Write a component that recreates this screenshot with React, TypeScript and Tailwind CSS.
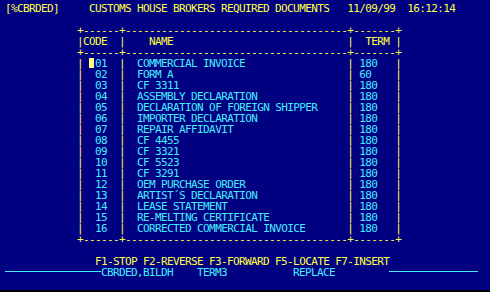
const docs: [string, string, string][] = [
  ['01', 'COMMERCIAL INVOICE', '180'],
  ['02', 'FORM A', '60'],
  ['03', 'CF 3311', '180'],
  ['04', 'ASSEMBLY DECLARATION', '180'],
  ['05', 'DECLARATION OF FOREIGN SHIPPER', '180'],
  ['06', 'IMPORTER DECLARATION', '180'],
  ['07', 'REPAIR AFFIDAVIT', '180'],
  ['08', 'CF 4455', '180'],
  ['09', 'CF 3321', '180'],
  ['10', 'CF 5523', '180'],
  ['11', 'CF 3291', '180'],
  ['12', 'OEM PURCHASE ORDER', '180'],
  ['13', 'ARTIST´S DECLARATION', '180'],
  ['14', 'LEASE STATEMENT', '180'],
  ['15', 'RE-MELTING CERTIFICATE', '180'],
  ['16', 'CORRECTED COMMERCIAL INVOICE', '180'],
]

const pad = (s: string, n: number) => s + ' '.repeat(Math.max(0, n - s.length))
const indent = ' '.repeat(12)
const border = indent + '+' + '-'.repeat(6) + '+' + '-'.repeat(37) + '+' + '-'.repeat(7) + '+'

function Row({ children }: { children?: React.ReactNode }) {
  return <div className="h-[11px] leading-[11px] whitespace-pre">{children}</div>
}

export default function App() {
  return (
    <div className="w-[490px] h-[292px] bg-black overflow-hidden">
      <div className="h-[290px] bg-[#000080] pt-[3px] pl-[5px] text-[11px] tracking-[-0.62px] font-['DejaVu_Sans_Mono',monospace] text-[#ffff44]">
        <Row>{'[%CBRDED]     CUSTOMS HOUSE BROKERS REQUIRED DOCUMENTS   11/09/99  16:12:14'}</Row>
        <Row />
        <Row>{border}</Row>
        <Row>{indent + '|CODE  |    NAME' + ' '.repeat(29) + '|  TERM |'}</Row>
        <Row>{border}</Row>
        {docs.map(([code, name, term], i) => (
          <Row key={code}>
            {indent + '| '}
            {i === 0 ? (
              <span className="inline-block w-[6px] h-[10px] align-[-1px]">
                <span className="block w-[5px] h-[10px] bg-[#ffff80]" />
              </span>
            ) : (
              ' '
            )}
            <span className="text-[#44eeff]">{code}</span>
            {'  |  '}
            <span className="text-[#44eeff]">{pad(name, 35)}</span>
            {'| '}
            <span className="text-[#44eeff]">{pad(term, 6)}</span>
            {'|'}
          </Row>
        ))}
        <Row>{border}</Row>
        <Row />
        <Row>{' '.repeat(15) + 'F1-STOP F2-REVERSE F3-FORWARD F5-LOCATE F7-INSERT'}</Row>
        <Row>
          <span className="inline-block w-[96px] h-px bg-[#44eeff] align-[4px]" />
          <span className="text-[#44eeff]">{'CBRDED,BILDH    TERM3' + ' '.repeat(11) + 'REPLACE' + ' '.repeat(9)}</span>
          <span className="inline-block w-[89px] h-px bg-[#44eeff] align-[4px]" />
        </Row>
      </div>
    </div>
  )
}
